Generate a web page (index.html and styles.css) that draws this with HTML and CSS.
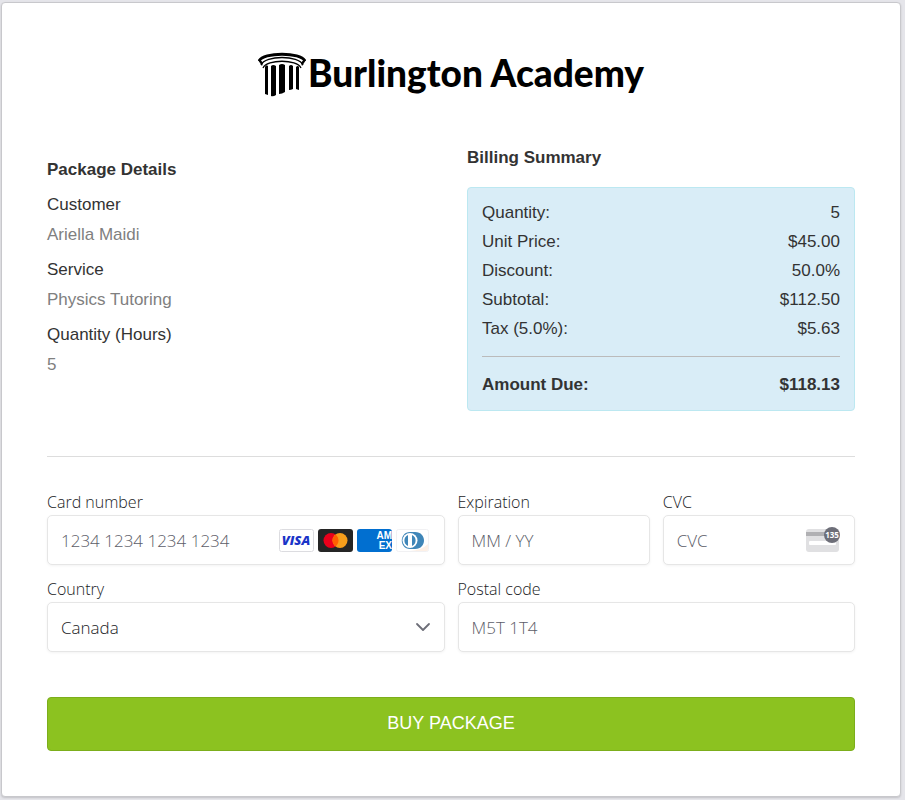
FILE: index.html
```html
<!DOCTYPE html>
<html lang="en">
<head>
    <meta charset="UTF-8">
    <meta name="viewport" content="width=device-width, initial-scale=1.0">
    <title>Burlington Academy - Buy Package</title>
    <link rel="stylesheet" href="styles.css">
</head>
<body>
    <main class="container">
        <header class="logo">
            <svg class="logo-icon" width="48" height="46" viewBox="0 0 48 46" aria-hidden="true">
                <path d="M1 9C5 0 43 0 47 9" fill="none" stroke="#000" stroke-width="2.8"/>
                <path d="M3 13C7 3 41 3 45 13" fill="none" stroke="#000" stroke-width="1.3"/>
                <path d="M0 8L4 14L5 11L2 7ZM48 8L44 14L43 11L46 7Z"/>
                <path d="M5 16C9 7 39 7 43 16" fill="none" stroke="#000" stroke-width="1.3"/>
                <path d="M7 15Q8 12 10 14V43L7 42ZM13 14Q15 12 18 14V43Q15 45 13 44ZM21 13Q24 11 27 13V40Q24 42 21 42ZM31 14Q33 12 35 14V37Q33 38 31 38ZM38 15Q40 13 41 15V38L38 37Z"/>
            </svg>
            <span class="logo-text">Burlington Academy</span>
        </header>

        <div class="summary">
            <section class="details">
                <h2>Package Details</h2>
                <dl>
                    <dt>Customer</dt>
                    <dd>Ariella Maidi</dd>
                    <dt>Service</dt>
                    <dd>Physics Tutoring</dd>
                    <dt>Quantity (Hours)</dt>
                    <dd>5</dd>
                </dl>
            </section>
            <section class="billing">
                <h2>Billing Summary</h2>
                <div class="billing-box">
                    <table>
                        <tbody>
                            <tr><th>Quantity:</th><td>5</td></tr>
                            <tr><th>Unit Price:</th><td>$45.00</td></tr>
                            <tr><th>Discount:</th><td>50.0%</td></tr>
                            <tr><th>Subtotal:</th><td>$112.50</td></tr>
                            <tr><th>Tax (5.0%):</th><td>$5.63</td></tr>
                        </tbody>
                    </table>
                    <hr>
                    <table class="total">
                        <tbody>
                            <tr><th>Amount Due:</th><td>$118.13</td></tr>
                        </tbody>
                    </table>
                </div>
            </section>
        </div>

        <hr class="divider">

        <form>
            <div class="fields">
                <div class="field wide">
                    <label for="card">Card number</label>
                    <div class="control">
                        <input type="text" id="card" placeholder="1234 1234 1234 1234">
                        <div class="cards">
                            <svg width="35" height="23" viewBox="0 0 35 23" aria-hidden="true">
                                <rect x=".5" y=".5" width="34" height="22" rx="2" fill="#fff" stroke="#dcdce0"/>
                                <text class="visa" x="17" y="16" text-anchor="middle">VISA</text>
                            </svg>
                            <svg width="35" height="23" viewBox="0 0 35 23" aria-hidden="true">
                                <rect width="35" height="23" rx="3" fill="#252525"/>
                                <circle cx="13" cy="11.5" r="7.5" fill="#eb001b"/>
                                <circle cx="22" cy="11.5" r="7.5" fill="#f79e1b"/>
                                <path d="M17.5 5.5A7.5 7.5 0 0 1 17.5 17.5A7.5 7.5 0 0 1 17.5 5.5Z" fill="#ff5f00"/>
                            </svg>
                            <svg width="35" height="23" viewBox="0 0 35 23" aria-hidden="true">
                                <rect width="35" height="23" rx="3" fill="#016fd0"/>
                                <text class="amex" x="35" y="10" text-anchor="end">AM</text>
                                <text class="amex" x="35" y="20" text-anchor="end">EX</text>
                            </svg>
                            <svg width="35" height="23" viewBox="0 0 35 23" aria-hidden="true">
                                <rect x=".5" y=".5" width="32" height="22" rx="2" fill="#fff" stroke="#f1f1f3"/>
                                <path d="M32 15Q26 21 14 22H31Q32 22 32 20Z" fill="#fdf0e6"/>
                                <path d="M14 3H19C31 3 31 20 19 20H14C3 20 3 3 14 3Z" fill="#3f86b8"/>
                                <circle cx="14" cy="11.5" r="7.5" fill="#fff"/>
                                <path d="M12 6A6 6 0 0 0 12 17ZM16 6A6 6 0 0 1 16 17Z" fill="#3f86b8"/>
                            </svg>
                        </div>
                    </div>
                </div>
                <div class="field">
                    <label for="expiration">Expiration</label>
                    <div class="control">
                        <input type="text" id="expiration" placeholder="MM / YY">
                    </div>
                </div>
                <div class="field">
                    <label for="cvc">CVC</label>
                    <div class="control">
                        <input type="text" id="cvc" placeholder="CVC">
                        <svg class="cvc-icon" width="36" height="26" viewBox="0 0 36 26" aria-hidden="true">
                            <rect x="1" y="2" width="33" height="23" rx="3" fill="#e0e0e2"/>
                            <rect x="1" y="5" width="33" height="4" fill="#b0b0b3"/>
                            <rect x="4" y="14" width="27" height="4" rx="1" fill="#fff"/>
                            <circle cx="27" cy="8" r="8" fill="#6d6e78"/>
                            <text class="cvc-digits" x="27" y="11" text-anchor="middle">135</text>
                        </svg>
                    </div>
                </div>
                <div class="field wide">
                    <label for="country">Country</label>
                    <div class="control">
                        <select id="country">
                            <option>Canada</option>
                            <option>United States</option>
                        </select>
                        <svg class="arrow" width="16" height="10" viewBox="0 0 16 10" aria-hidden="true">
                            <path d="M2 2L8 8L14 2" fill="none" stroke="#6d6e78" stroke-width="1.8" stroke-linecap="round" stroke-linejoin="round"/>
                        </svg>
                    </div>
                </div>
                <div class="field wide">
                    <label for="postal">Postal code</label>
                    <div class="control">
                        <input type="text" id="postal" placeholder="M5T 1T4">
                    </div>
                </div>
            </div>
            <button type="submit">BUY PACKAGE</button>
        </form>
    </main>
</body>
</html>
```
FILE: styles.css
```css
* {
    box-sizing: border-box;
}
body {
    margin: 0;
    padding: 2px 4px 2px 1px;
    background: #e5e5ea;
    font-family: Arial, "Liberation Sans", sans-serif;
    font-size: 17px;
    color: #333;
}
.container {
    padding: 48px 45px 45px;
    background: #fff;
    border: 1px solid #c8c8cc;
    border-radius: 4px;
    box-shadow: 0 1px 2px rgba(0, 0, 0, 0.15);
}
.logo {
    display: flex;
    justify-content: center;
    align-items: center;
    gap: 2px;
    height: 48px;
}
.logo-text {
    padding-bottom: 4px;
    font-family: Lato, sans-serif;
    font-size: 37px;
    font-weight: 900;
    line-height: 44px;
    color: #000;
}
.summary {
    display: grid;
    grid-template-columns: 1fr 388px;
    align-items: start;
    margin-top: 44px;
}
h2 {
    margin: 0;
    font-size: 17px;
    line-height: 30px;
}
.details {
    padding-top: 12px;
}
dl {
    margin: 5px 0 0;
    line-height: 30px;
}
dd {
    margin: 0 0 5px;
    color: #808080;
}
.billing-box {
    margin-top: 14px;
    padding: 10px 14px 11px;
    background: #d9edf7;
    border: 1px solid #bce8f1;
    border-radius: 4px;
}
.billing-box table {
    width: 100%;
    border-collapse: collapse;
    line-height: 29px;
}
.billing-box th,
.billing-box td {
    padding: 0;
    font-weight: normal;
    text-align: left;
}
.billing-box td {
    text-align: right;
}
.billing-box .total th,
.billing-box .total td {
    font-weight: bold;
}
hr {
    height: 1px;
    margin: 13px 0;
    border: none;
    background: #bbb;
}
.divider {
    margin: 45px 0 32px;
    background: #ddd;
}
.fields {
    display: grid;
    grid-template-columns: repeat(4, 1fr);
    gap: 11px 13px;
}
.wide {
    grid-column: span 2;
}
.field,
.field input,
.field select {
    font-family: "Open Sans", sans-serif;
    font-weight: 300;
    color: #1a1b25;
}
.field label {
    display: block;
    font-size: 16px;
    line-height: 26px;
}
.control {
    display: flex;
    align-items: center;
    height: 50px;
    padding-right: 13px;
    background: #fff;
    border: 1px solid #e6e6e6;
    border-radius: 5px;
    box-shadow: 0 1px 3px rgba(0, 0, 0, 0.05);
}
.field input,
.field select {
    flex: 1;
    width: 100%;
    min-width: 0;
    height: 48px;
    padding: 0 13px;
    border: none;
    background: none;
    font-size: 17px;
    appearance: none;
    outline: none;
}
.field input::placeholder {
    color: #5c5d68;
    opacity: 1;
}
.cards {
    display: flex;
    gap: 4px;
}
.visa {
    font: italic 800 13px "Open Sans", sans-serif;
    fill: #1a34c8;
}
.amex {
    font: bold 10px "Liberation Sans", sans-serif;
    fill: #fff;
}
.cvc-digits {
    font: bold 8px "Open Sans", sans-serif;
    fill: #fff;
}
button {
    display: block;
    width: 100%;
    height: 54px;
    margin-top: 45px;
    padding: 0 0 2px;
    background: #8cc220;
    border: 1px solid #7cae1b;
    border-radius: 4px;
    font-family: inherit;
    font-size: 18px;
    color: #fff;
    cursor: pointer;
}
```
